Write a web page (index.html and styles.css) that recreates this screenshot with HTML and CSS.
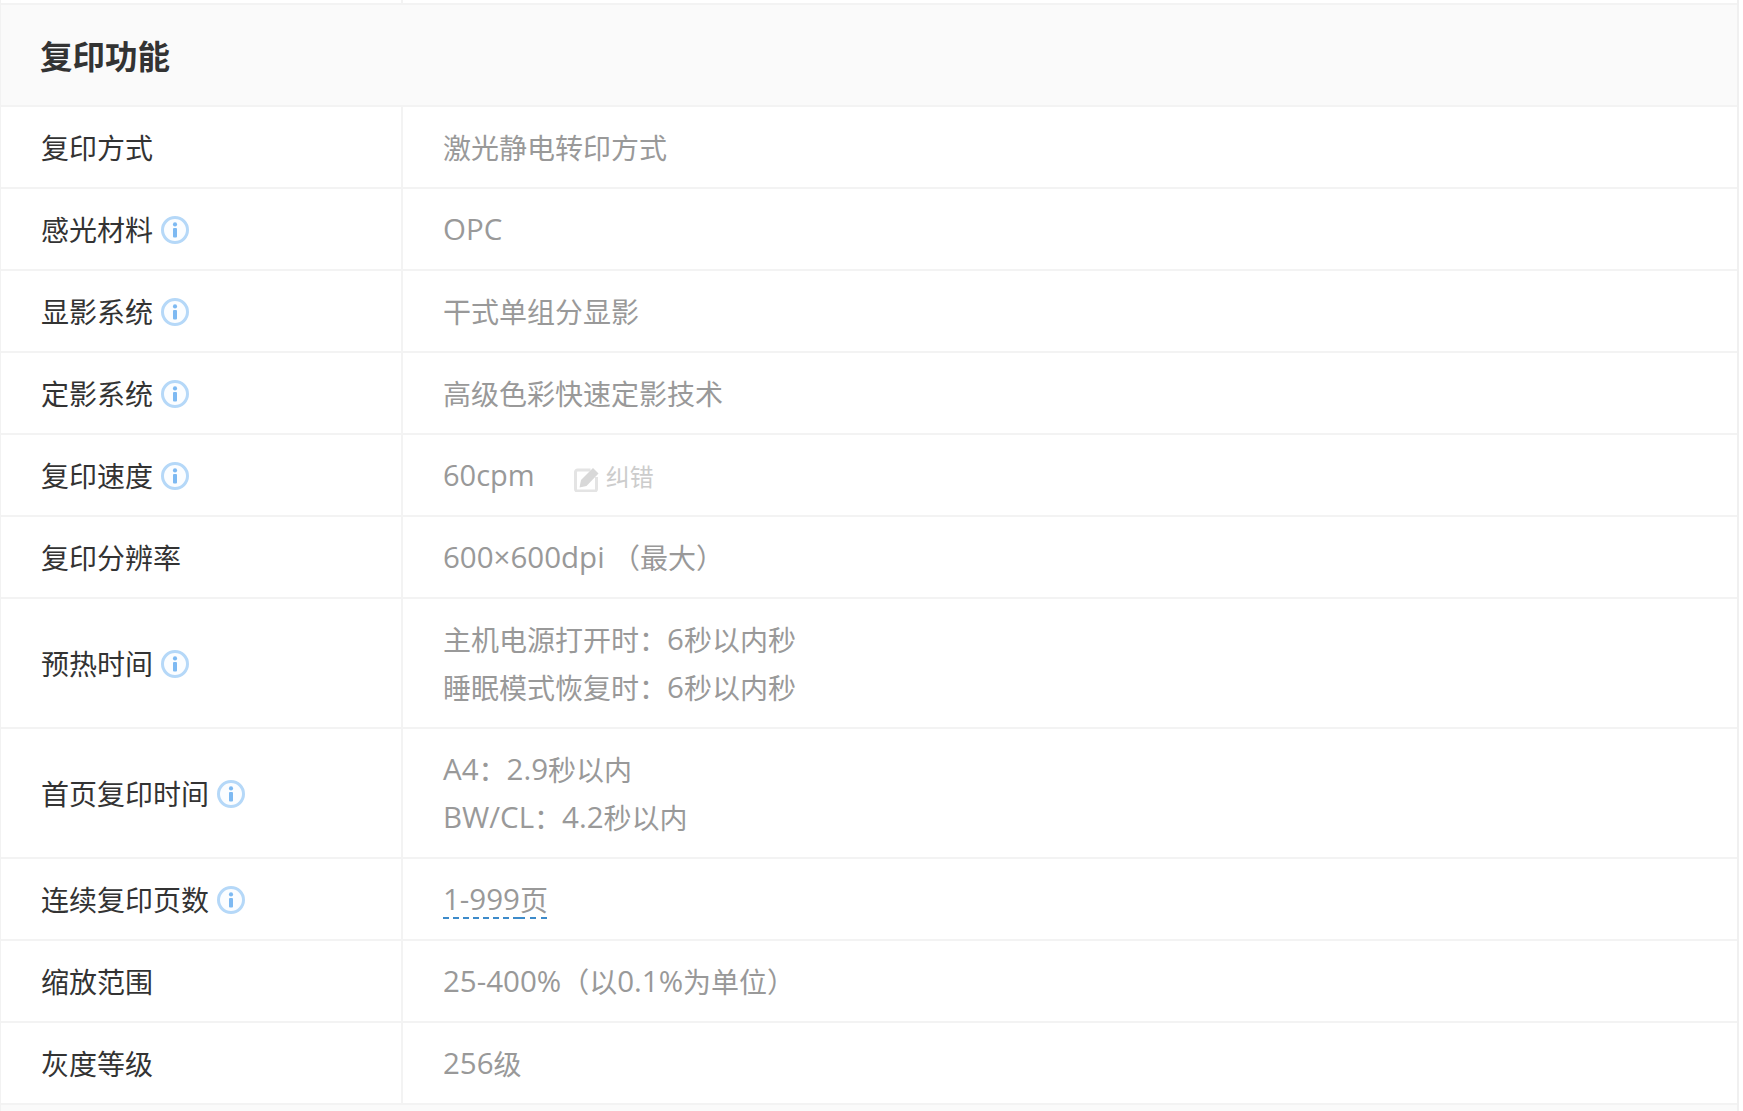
FILE: index.html
```html
<!DOCTYPE html>
<html lang="zh-CN">
<head>
<meta charset="utf-8">
<title>复印功能</title>
<link rel="stylesheet" href="styles.css">
</head>
<body>
<svg class="defs" width="0" height="0" aria-hidden="true"><defs>
<symbol id="info" viewBox="0 0 28 28">
<circle cx="14" cy="14" r="12.5" fill="#fbfdff" stroke="#b5d8f8" stroke-width="3"/>
<circle cx="14" cy="8.4" r="2.1" fill="#7db9f2"/>
<rect x="12" y="12" width="4" height="9.600" rx="1" fill="#7db9f2"/>
</symbol>
</defs></svg>
<main class="spec">
  <div class="row stub"><div class="key"></div><div class="val"></div></div>
  <h2 class="head">复印功能</h2>
  <div class="row"><div class="key">复印方式</div><div class="val">激光静电转印方式</div></div>
  <div class="row"><div class="key">感光材料<svg class="info"><use href="#info"/></svg></div><div class="val"><span class="num">OPC</span></div></div>
  <div class="row"><div class="key">显影系统<svg class="info"><use href="#info"/></svg></div><div class="val">干式单组分显影</div></div>
  <div class="row"><div class="key">定影系统<svg class="info"><use href="#info"/></svg></div><div class="val">高级色彩快速定影技术</div></div>
  <div class="row"><div class="key">复印速度<svg class="info"><use href="#info"/></svg></div><div class="val"><span class="num unit">60cpm</span><a class="fix"><svg class="pen" viewBox="0 0 25 25"><path d="M16.500 3H3.500a2 2 0 0 0-2 2v17a2 2 0 0 0 2 2h17a2 2 0 0 0 2-2V10" fill="none" stroke="#e4e4e4" stroke-width="3"/><path d="M5.500 20.500l1.500-7.500L19 1l5.500 5.500L12.500 19z" fill="#d8d8d8"/></svg>纠错</a></div></div>
  <div class="row"><div class="key">复印分辨率</div><div class="val"><span class="num">600×600dpi</span> （最大）</div></div>
  <div class="row"><div class="key">预热时间<svg class="info"><use href="#info"/></svg></div><div class="val">主机电源打开时：<span class="num">6</span>秒以内秒<br>睡眠模式恢复时：<span class="num">6</span>秒以内秒</div></div>
  <div class="row"><div class="key">首页复印时间<svg class="info"><use href="#info"/></svg></div><div class="val"><span class="num">A4</span>：<span class="num">2.9</span>秒以内<br><span class="num">BW/CL</span>：<span class="num">4.2</span>秒以内</div></div>
  <div class="row"><div class="key">连续复印页数<svg class="info"><use href="#info"/></svg></div><div class="val"><span class="dash"><span class="num">1-999</span>页</span></div></div>
  <div class="row"><div class="key">缩放范围</div><div class="val"><span class="num">25-400%</span>（以<span class="num">0.1%</span>为单位）</div></div>
  <div class="row"><div class="key">灰度等级</div><div class="val"><span class="num">256</span>级</div></div>
  <div class="tail"></div>
</main>
</body>
</html>
```
FILE: styles.css
```css
html, body { margin: 0; padding: 0; background: #fff; overflow: hidden; }
.defs { position: absolute; }
.spec {
  width: 1736px;
  border-left: 1px solid #f2f2f2;
  border-right: 2px solid #f0f0f0;
  font-family: "Open Sans", "Noto Sans CJK SC", sans-serif;
  font-size: 28px;
  line-height: 48px;
}
.head {
  margin: 0;
  height: 102px;
  box-sizing: border-box;
  padding: 4px 0 0 39px;
  display: flex;
  align-items: center;
  font-size: 32.5px;
  font-weight: 700;
  color: #333;
  background: #fafafa;
  border-bottom: 2px solid #f3f3f3;
}
.row {
  display: flex;
  border-bottom: 2px solid #f3f3f3;
}
.stub { height: 3px; }
.key {
  width: 402px;
  flex: none;
  box-sizing: border-box;
  padding: 17px 0 15px 40px;
  display: flex;
  align-items: center;
  color: #333;
  border-right: 2px solid #f3f3f3;
}
.val {
  flex: 1;
  padding: 17px 0 15px 40px;
  color: #999;
}
.stub .key, .stub .val { padding: 0; }
.num { font-size: 29.5px; line-height: 1; vertical-align: 1px; }
.unit { font-size: 29px; }
.info { width: 28px; height: 28px; margin-left: 8px; flex: none; }
.fix {
  margin-left: 39px;
  font-size: 24px;
  line-height: 1;
  color: #ccc;
  vertical-align: 1px;
}
.pen { width: 25px; height: 25px; margin-right: 7px; vertical-align: -6px; }
.dash {
  text-decoration: underline dashed #3d8bca 2px;
  text-underline-offset: 6px;
  text-decoration-skip-ink: none;
}
.tail { height: 7px; background: #fafafa; }
```
